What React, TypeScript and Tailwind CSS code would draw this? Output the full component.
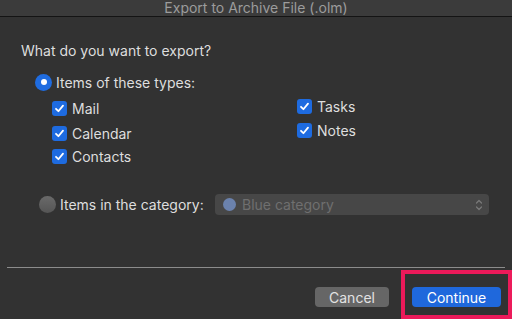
import React from 'react';

function Check() {
  return (
    <div className="w-[15px] h-[15px] rounded-[3px] bg-[#1e6be0] flex items-center justify-center shrink-0">
      <svg width="11" height="11" viewBox="0 0 11 11" fill="none">
        <path d="M2 5.8 L4.4 8.2 L9 2.6" stroke="#ffffff" strokeWidth="1.8" strokeLinecap="round" strokeLinejoin="round" />
      </svg>
    </div>
  );
}

function CheckItem({ label }: { label: string }) {
  return (
    <div className="flex items-center gap-[5px] h-[16px]">
      <Check />
      <span>{label}</span>
    </div>
  );
}

export default function App() {
  return (
    <div
      className="relative w-[512px] h-[319px] bg-[#323232] overflow-hidden flex flex-col text-[14px] text-[#dedede]"
      style={{ fontFamily: 'Inter, "Noto Sans", sans-serif' }}
    >
      {/* Title bar */}
      <div className="h-[17px] bg-[#3b3b3b] border-b border-[#141414] text-[#9c9c9c] text-center leading-[16px]">
        Export to Archive File (.olm)
      </div>

      <div className="mt-[26px] h-[16px] leading-[16px] pl-[21px]">What do you want to export?</div>

      {/* Items of these types */}
      <div className="mt-[14px] h-[18px] pl-[35px] flex items-center gap-[4px]">
        <div className="w-[17px] h-[17px] rounded-full bg-[#1f6ce0] flex items-center justify-center">
          <div className="w-[6px] h-[6px] rounded-full bg-white" />
        </div>
        <span>Items of these types:</span>
      </div>

      <div className="mt-[7px] pl-[52px] flex">
        <div className="w-[245px] pt-[2px] flex flex-col">
          <CheckItem label="Mail" />
          <div className="mt-[9px]">
            <CheckItem label="Calendar" />
          </div>
          <div className="mt-[7px]">
            <CheckItem label="Contacts" />
          </div>
        </div>
        <div className="flex flex-col gap-[8px]">
          <CheckItem label="Tasks" />
          <CheckItem label="Notes" />
        </div>
      </div>

      {/* Items in the category */}
      <div className="mt-[30px] h-[21px] pl-[39px] pr-[23px] flex items-center">
        <div className="w-[17px] h-[17px] rounded-full bg-gradient-to-b from-[#6a6a6a] to-[#555555]" />
        <span className="ml-[4px]">Items in the category:</span>
        <div className="ml-auto w-[274px] h-[21px] rounded-[4px] bg-[#474747] flex items-center pl-[8px] pr-[6px]">
          <div className="w-[13px] h-[13px] rounded-full bg-[#6b82ad]" />
          <span className="ml-[6px] text-[#6f6f6f]">Blue category</span>
          <svg className="ml-auto" width="8" height="14" viewBox="0 0 8 14" fill="none">
            <path d="M1.5 5 L4 2.5 L6.5 5" stroke="#7a7a7a" strokeWidth="1.2" strokeLinecap="round" strokeLinejoin="round" />
            <path d="M1.5 9 L4 11.5 L6.5 9" stroke="#7a7a7a" strokeWidth="1.2" strokeLinecap="round" strokeLinejoin="round" />
          </svg>
        </div>
      </div>

      {/* Separator */}
      <div className="mt-[52px] mx-[7px] h-px bg-[#8c8c8c]" />

      {/* Buttons */}
      <div className="mt-[19px] h-[20px] pr-[11px] flex justify-end gap-[23px]">
        <div className="w-[74px] h-[20px] rounded-[4px] bg-[#666666] text-[#e2e2e2] flex items-center justify-center">
          Cancel
        </div>
        <div className="w-[89px] h-[20px] rounded-[4px] bg-[#1f68dc] text-white flex items-center justify-center">
          Continue
        </div>
      </div>

      {/* Highlight annotation */}
      <div className="absolute left-[401px] top-[270px] w-[111px] h-[49px] border-4 border-[#ec1a5a]" />
    </div>
  );
}
